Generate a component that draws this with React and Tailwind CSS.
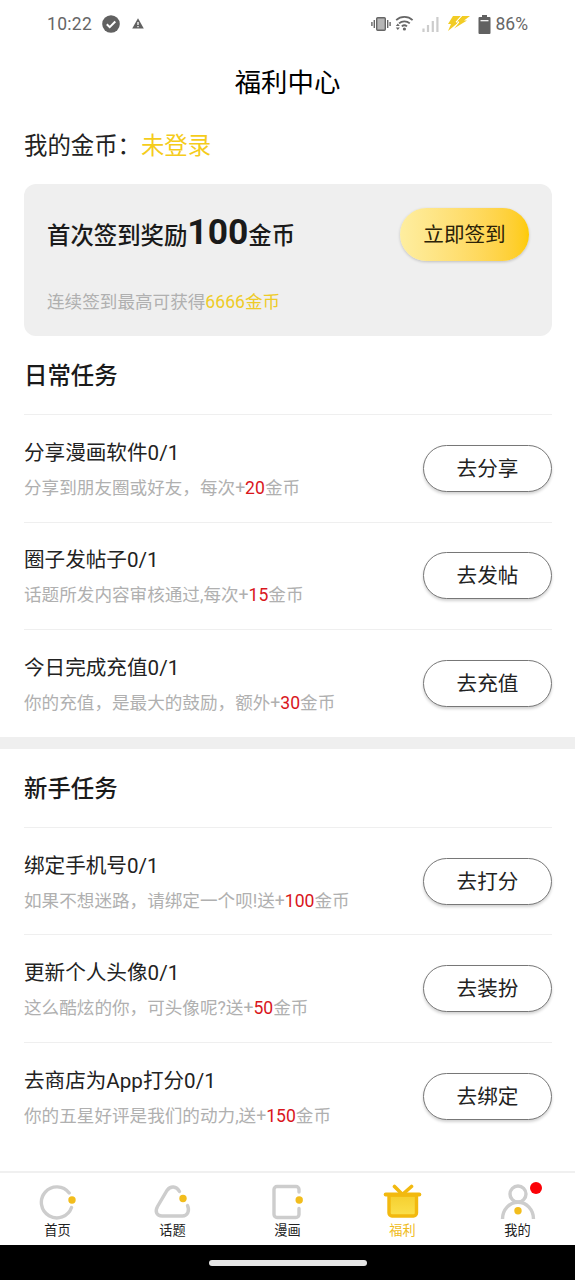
const dailyTasks = [
  { title: "分享漫画软件0/1", before: "分享到朋友圈或好友，每次+", coins: 20, action: "去分享" },
  { title: "圈子发帖子0/1", before: "话题所发内容审核通过,每次+", coins: 15, action: "去发帖" },
  { title: "今日完成充值0/1", before: "你的充值，是最大的鼓励，额外+", coins: 30, action: "去充值" },
];

const newbieTasks = [
  { title: "绑定手机号0/1", before: "如果不想迷路，请绑定一个呗!送+", coins: 100, action: "去打分" },
  { title: "更新个人头像0/1", before: "这么酷炫的你，可头像呢?送+", coins: 50, action: "去装扮" },
  { title: "去商店为App打分0/1", before: "你的五星好评是我们的动力,送+", coins: 150, action: "去绑定" },
];

const StatusBar = () => (
  <div className="flex h-12 items-center justify-between px-[47px] text-[17.5px] text-[#666]">
    <div className="flex items-center">
      <span className="w-[55px] tracking-[0.3px]">10:22</span>
      <svg width="18" height="18" viewBox="0 0 18 18">
        <circle cx="9" cy="9" r="8.8" fill="#616161" />
        <path d="M4.8 9.2l2.9 2.9 5.6-5.6" fill="none" stroke="#fff" strokeWidth="2" />
      </svg>
      <svg className="-mt-px ml-3" width="12" height="11" viewBox="0 0 12 11">
        <path d="M6 0.3L11.8 10.5H0.2z" fill="#616161" />
        <path d="M6 4v3M6 8v1.3" stroke="#fff" strokeWidth="1.3" />
      </svg>
    </div>
    <div className="flex items-center">
      <svg className="-mt-px" width="20" height="16" viewBox="0 0 20 16">
        <rect x="5.7" y="1.7" width="8.6" height="12.6" rx="1" fill="#b5b5b5" stroke="#666" strokeWidth="1.4" />
        <path d="M3.3 4v8M0.9 6v4M16.7 4v8M19.1 6v4" stroke="#666" strokeWidth="1.4" />
      </svg>
      <svg className="-mt-[2px] ml-1" width="19" height="16" viewBox="0 0 19 16">
        <g fill="none" stroke="#666" strokeWidth="1.8">
          <path d="M1.2 5.2a12 12 0 0 1 16.4 0" />
          <path d="M4 8.4a8 8 0 0 1 10.8 0" />
          <path d="M6.8 11.4a4 4 0 0 1 5.2 0" />
        </g>
        <circle cx="9.4" cy="14" r="1.6" fill="#666" />
        <path d="M2.8 8.5l2 2.5h-4zM2.8 15l2-2.5h-4z" fill="#666" />
      </svg>
      <svg className="-mt-px ml-2" width="17" height="16" viewBox="0 0 17 16">
        <path d="M1.5 12.5V16M6 9v7M10.8 5v11M15.4 1v15" stroke="#ccc" strokeWidth="2.2" />
      </svg>
      <svg className="-mt-px ml-[9px]" width="22" height="15" viewBox="0 0 22 15">
        <path d="M5 0h8L7.5 6H11L0 15 3 8H0z" fill="#f2cc24" />
        <path d="M14 0H22l-6 4.5h3L6 12.5 11 6.5H8z" fill="#f2cc24" />
        <path d="M13.5 0L8 6h3L5 12.5" fill="none" stroke="#fff" strokeWidth="1" />
      </svg>
      <svg className="ml-[8px]" width="13" height="19" viewBox="0 0 13 19">
        <path d="M4 0h5v2h2.5a1 1 0 0 1 1 1v15a1 1 0 0 1-1 1h-10a1 1 0 0 1-1-1V3a1 1 0 0 1 1-1H4z" fill="#616161" />
        <path d="M2.5 5.7h8" stroke="#fff" strokeWidth="1.2" />
      </svg>
      <span className="ml-[5px]">86%</span>
    </div>
  </div>
);

const TaskRow = ({ task }) => (
  <li className="flex h-[107.6px] items-center justify-between border-t border-[#efefef]">
    <div className="pt-[4px]">
      <h3 className="text-[20.6px] leading-[35px] text-[#222]">{task.title}</h3>
      <p className="text-[17.6px] leading-[34px] text-[#b0b0b0]">
        {task.before}
        <span className="text-[#d9161c]">{task.coins}</span>
        金币
      </p>
    </div>
    <button className="h-[47px] w-[129px] rounded-full border border-[#777] bg-white pt-[2px] text-[20.6px] text-[#222] shadow-[0_2px_3px_rgba(0,0,0,0.18)]">
      {task.action}
    </button>
  </li>
);

const TaskSection = ({ title, tasks }) => (
  <section className="pl-6 pr-[23px]">
    <h2 className="flex h-[78px] items-center pt-[3px] text-[23.4px] font-medium text-[#1a1a1a]">{title}</h2>
    <ul>
      {tasks.map((task) => (
        <TaskRow key={task.title} task={task} />
      ))}
    </ul>
  </section>
);

const HomeIcon = () => (
  <svg width="40" height="36" viewBox="0 0 40 36">
    <path d="M31.2 9A15.5 15.5 0 1 0 33.5 23.5" fill="none" stroke="#cdcdcd" strokeWidth="3.4" strokeLinecap="round" />
    <circle cx="34" cy="16" r="3.7" fill="#f2bd1d" />
  </svg>
);

const TopicIcon = () => (
  <svg width="40" height="36" viewBox="0 0 40 36">
    <path
      d="M26.5 7.5C23.5 2 17.5 1.5 14 6.5L4.5 22.5C1.5 28 4 32 9 32H29.5C34.5 32 37 27 34.5 21.5"
      fill="none"
      stroke="#cdcdcd"
      strokeWidth="3.4"
      strokeLinecap="round"
    />
    <circle cx="30" cy="14.5" r="3.7" fill="#f2bd1d" />
  </svg>
);

const ComicIcon = () => (
  <svg width="40" height="36" viewBox="0 0 40 36">
    <path
      d="M31 8V5.500a3 3 0 0 0-3-3H9a3 3 0 0 0-3 3V30.500a3 3 0 0 0 3 3H28a3 3 0 0 0 3-3V24.500"
      fill="none"
      stroke="#cdcdcd"
      strokeWidth="3.4"
      strokeLinecap="round"
    />
    <circle cx="31.2" cy="16" r="3.7" fill="#f2bd1d" />
  </svg>
);

const GiftIcon = () => (
  <svg width="40" height="36" viewBox="0 0 40 36">
    <defs>
      <linearGradient id="gift" x1="0" y1="0" x2="0" y2="1">
        <stop offset="0" stopColor="#f5cf2f" />
        <stop offset="1" stopColor="#fbe04b" />
      </linearGradient>
    </defs>
    <path d="M11.5 2.5L18.5 9.5M28.5 2.5L20.5 9.5" stroke="#f2b90f" strokeWidth="3.6" strokeLinecap="round" />
    <path d="M6 11V29a3 3 0 0 0 3 3H30.500a3 3 0 0 0 3-3V11z" fill="url(#gift)" stroke="#f2b90f" strokeWidth="3.4" />
    <path d="M2.700 10.5H36.300" stroke="#f2b90f" strokeWidth="4" strokeLinecap="round" />
  </svg>
);

const ProfileIcon = () => (
  <svg width="40" height="36" viewBox="0 0 40 36">
    <g fill="none" stroke="#cdcdcd" strokeWidth="3.4">
      <circle cx="20" cy="10" r="8" />
      <path d="M4.5 35A15.5 16.8 0 0 1 35.5 35" />
    </g>
    <circle cx="20" cy="26.7" r="3.7" fill="#f2bd1d" />
  </svg>
);

const tabs = [
  { label: "首页", icon: HomeIcon },
  { label: "话题", icon: TopicIcon },
  { label: "漫画", icon: ComicIcon },
  { label: "福利", icon: GiftIcon, active: true },
  { label: "我的", icon: ProfileIcon, badge: true },
];

const TabBar = () => (
  <nav className="flex h-[74px] border-t-2 border-[#f0f0f0] bg-white">
    {tabs.map(({ label, icon: Icon, active, badge }) => (
      <a key={label} className="flex flex-1 flex-col items-center pt-[11px]">
        <span className="relative">
          <Icon />
          {badge && <i className="absolute -top-[2px] right-[-4px] size-3 rounded-full bg-[#fb0207]" />}
        </span>
        <span className={`text-[13.2px] leading-[22px] ${active ? "text-[#efbb20]" : "text-[#222]"}`}>{label}</span>
      </a>
    ))}
  </nav>
);

const App = () => {
  return (
    <div
      lang="zh-CN"
      className="flex h-[1280px] w-[575px] flex-col overflow-hidden bg-white font-[Roboto,'Noto_Sans_CJK_SC',sans-serif]"
    >
      <StatusBar />
      <header className="flex h-[72px] items-center justify-center text-[26.4px] text-black">福利中心</header>
      <div className="flex h-[64px] items-center px-6 pb-[10px] text-[23.4px] text-[#222]">
        我的金币：<span className="text-[#f5cc1b]">未登录</span>
      </div>

      <section className="ml-6 mr-[23px] h-[152px] rounded-xl bg-[#efefef] px-[23px] pt-[23px]">
        <div className="flex h-[54px] items-center justify-between">
          <p className="text-[23.4px] font-medium leading-[52px] text-[#1a1a1a]">
            首次签到奖励<span className="text-[35.4px] font-bold">100</span>金币
          </p>
          <button className="h-[53px] w-[129px] rounded-full bg-gradient-to-r from-[#feeea0] to-[#fecb00] pt-[2px] text-[20.6px] text-[#2b2208] shadow-[0_1px_3px_rgba(0,0,0,0.2)]">
            立即签到
          </button>
        </div>
        <p className="mt-[27px] text-[17.6px] leading-[28px] text-[#b0b0b0]">
          连续签到最高可获得<span className="text-[#eecb28]">6666金币</span>
        </p>
      </section>

      <TaskSection title="日常任务" tasks={dailyTasks} />
      <div className="h-[12px] shrink-0 bg-[#efefef]" />
      <TaskSection title="新手任务" tasks={newbieTasks} />

      <div className="mt-auto shrink-0">
        <TabBar />
        <div className="flex h-[35px] items-center justify-center bg-black">
          <div className="h-[6px] w-[158px] rounded-full bg-[#e6e6e6]" />
        </div>
      </div>
    </div>
  );
};

export default App;
